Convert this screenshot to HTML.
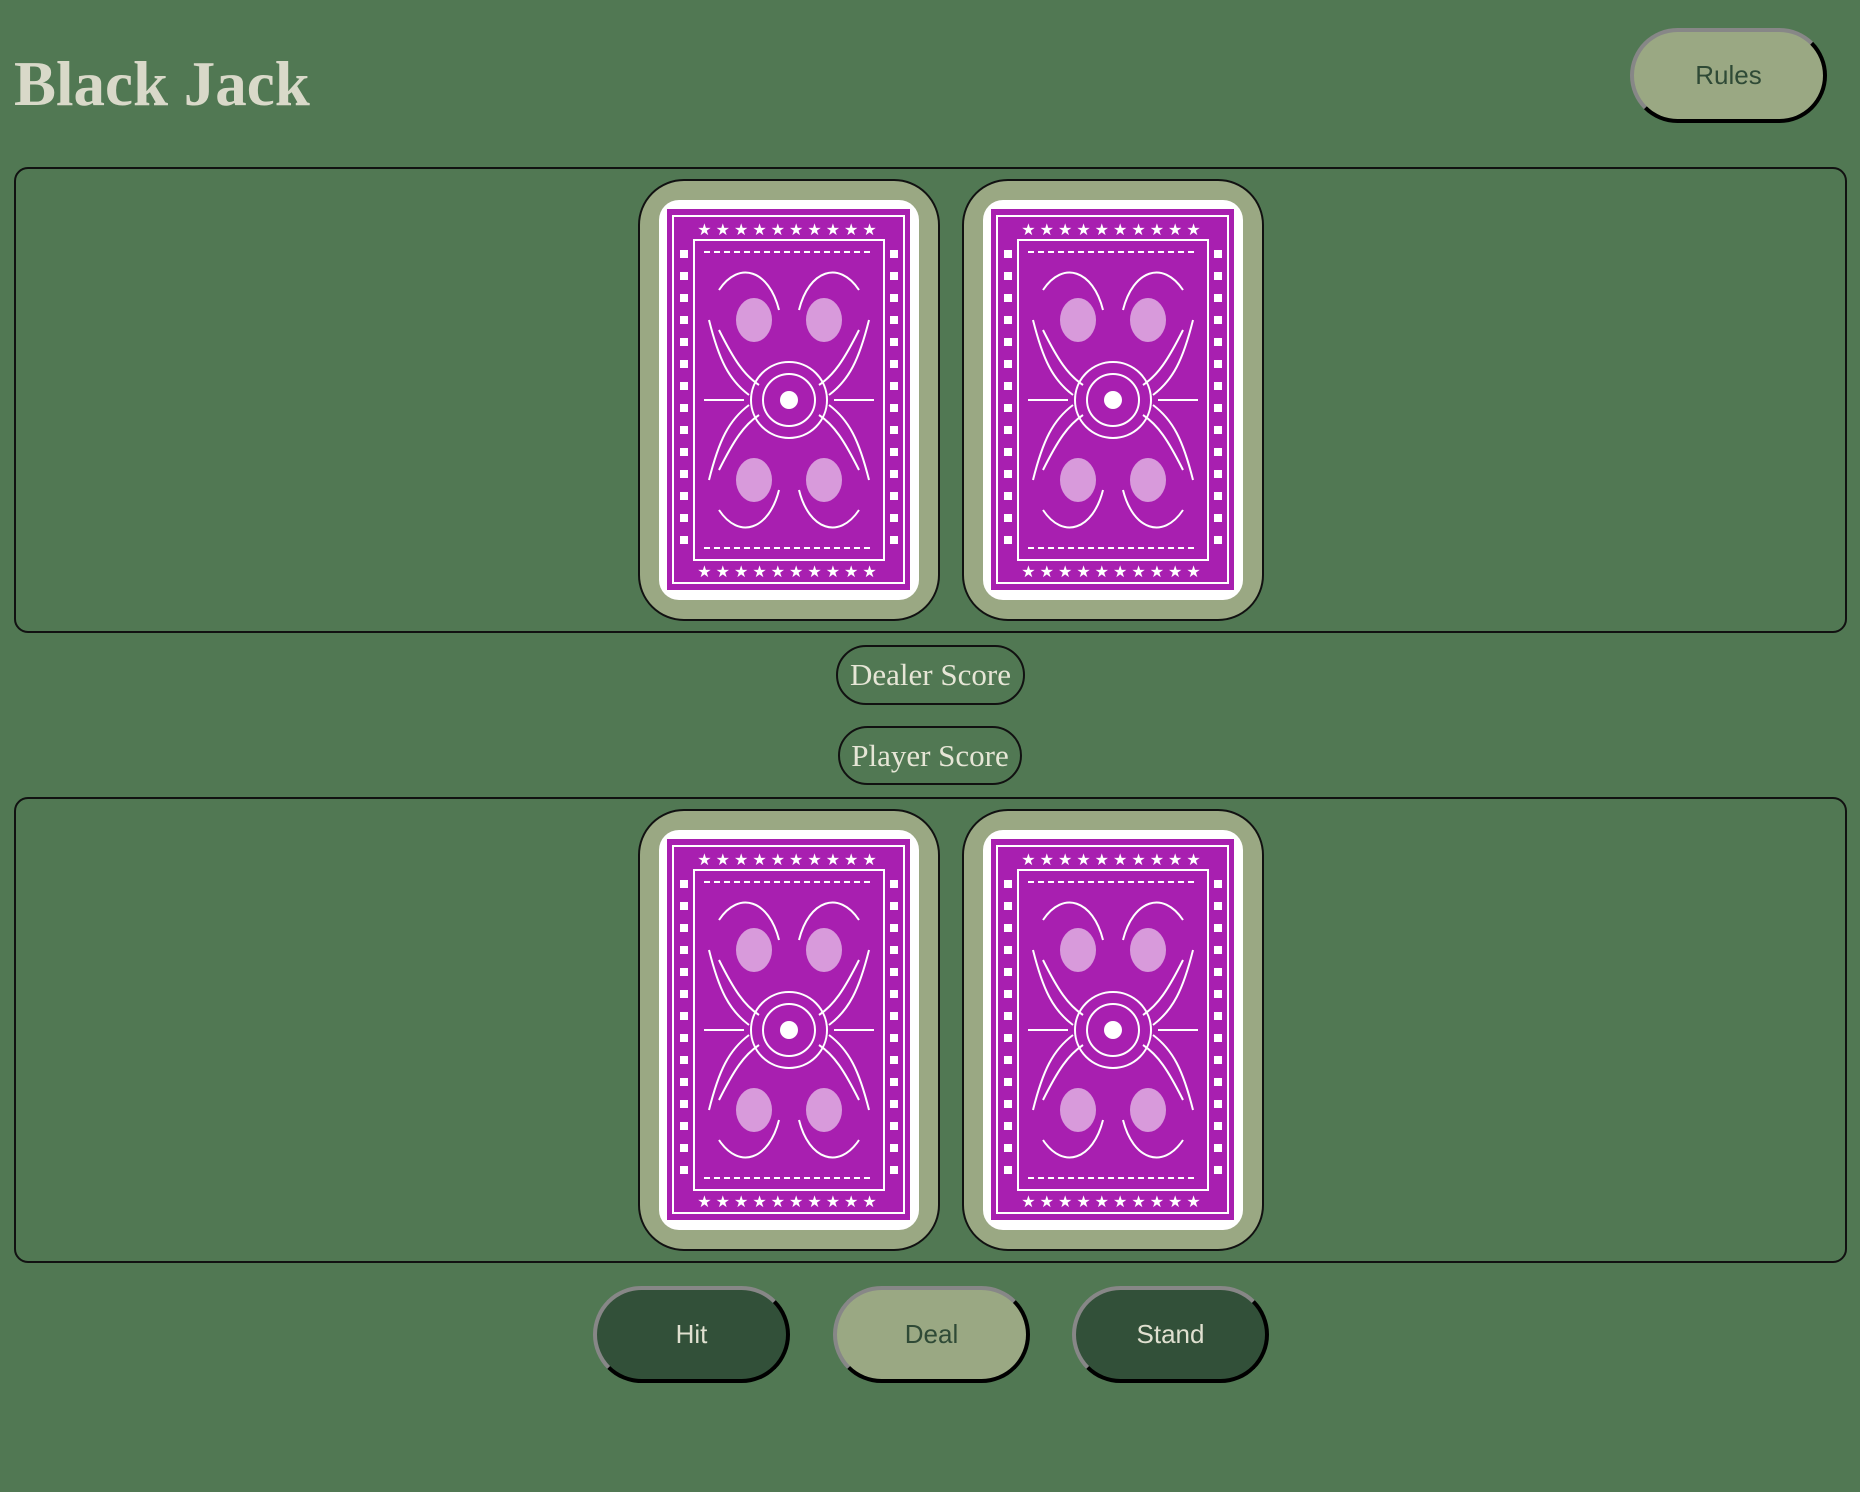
<!DOCTYPE html>
<html><head><meta charset="utf-8"><style>
*{box-sizing:border-box;margin:0;padding:0}
body{width:1860px;height:1492px;background:#517853;position:relative;overflow:hidden;font-family:"Liberation Sans",sans-serif}
h1{position:absolute;left:14px;top:48px;font:bold 63px "Liberation Serif",serif;color:#d9d9c9}
.btn{position:absolute;border-radius:50px;border:4px outset #333;font-size:26px;display:flex;align-items:center;justify-content:center}
.lt{background:#9aa883;color:#2f4a36}
.dk{background:#325039;color:#e0e0d0}
.box{position:absolute;left:14px;width:1833px;height:466px;border:2px solid #111;border-radius:14px}
.card{position:absolute;width:302px;height:442px;background:#9aa883;border:2px solid #111;border-radius:46px}
.card svg{position:absolute;left:19px;top:19px}
.pill{position:absolute;border:2px solid #111;border-radius:30px;font:31px "Liberation Serif",serif;color:#e6e6d6;display:flex;align-items:center;justify-content:center}
</style></head><body>
<svg width="0" height="0" style="position:absolute"><defs>
<g id="cb">
<rect width="260" height="400" rx="20" fill="#fff"/>
<rect x="8" y="9" width="243" height="381" fill="#a81fb0"/>
<rect x="14" y="16" width="231" height="367" fill="none" stroke="#fff" stroke-width="2"/>
<rect x="35" y="40" width="190" height="320" fill="none" stroke="#fff" stroke-width="2"/>
<g fill="#fff" font-size="16" font-family="DejaVu Sans" text-anchor="middle">
<text x="130" y="35" letter-spacing="4">★★★★★★★★★★</text>
<text x="130" y="377" letter-spacing="4">★★★★★★★★★★</text>
</g>
<g stroke="#fff" stroke-width="2" fill="none">
<line x1="25" y1="50" x2="25" y2="355" stroke-dasharray="8 14" stroke-width="8"/>
<line x1="235" y1="50" x2="235" y2="355" stroke-dasharray="8 14" stroke-width="8"/>
<circle cx="130" cy="200" r="38"/><circle cx="130" cy="200" r="26"/>
<path d="M45 200h40M175 200h40"/>
<path d="M60 90c20-30 50-20 60 20M200 90c-20-30-50-20-60 20M60 310c20 30 50 20 60-20M200 310c-20 30-50 20-60-20"/>
<path d="M50 120c10 40 20 60 40 75M210 120c-10 40-20 60-40 75M50 280c10-40 20-60 40-75M210 280c-10-40-20-60-40-75"/>
<path d="M60 130c15 30 25 45 40 55M200 130c-15 30-25 45-40 55M60 270c15-30 25-45 40-55M200 270c-15-30-25-45-40-55"/>
<path d="M45 52h170M45 348h170" stroke-dasharray="6 4"/>
</g>
<g fill="#fff"><circle cx="130" cy="200" r="9"/>
<ellipse cx="95" cy="120" rx="18" ry="22" opacity=".55"/><ellipse cx="165" cy="120" rx="18" ry="22" opacity=".55"/>
<ellipse cx="95" cy="280" rx="18" ry="22" opacity=".55"/><ellipse cx="165" cy="280" rx="18" ry="22" opacity=".55"/></g>
</g></defs></svg>
<h1>Black Jack</h1>
<div class="btn lt" style="left:1630px;top:28px;width:197px;height:95px">Rules</div>
<div class="box" style="top:167px"></div>
<div class="card" style="left:638px;top:179px"><svg width="260" height="400"><use href="#cb"/></svg></div>
<div class="card" style="left:962px;top:179px"><svg width="260" height="400"><use href="#cb"/></svg></div>
<div class="pill" style="left:836px;top:645px;width:189px;height:60px">Dealer Score</div>
<div class="pill" style="left:838px;top:726px;width:184px;height:59px">Player Score</div>
<div class="box" style="top:797px"></div>
<div class="card" style="left:638px;top:809px"><svg width="260" height="400"><use href="#cb"/></svg></div>
<div class="card" style="left:962px;top:809px"><svg width="260" height="400"><use href="#cb"/></svg></div>
<div class="btn dk" style="left:593px;top:1286px;width:197px;height:97px">Hit</div>
<div class="btn lt" style="left:833px;top:1286px;width:197px;height:97px">Deal</div>
<div class="btn dk" style="left:1072px;top:1286px;width:197px;height:97px">Stand</div>
</body></html>
